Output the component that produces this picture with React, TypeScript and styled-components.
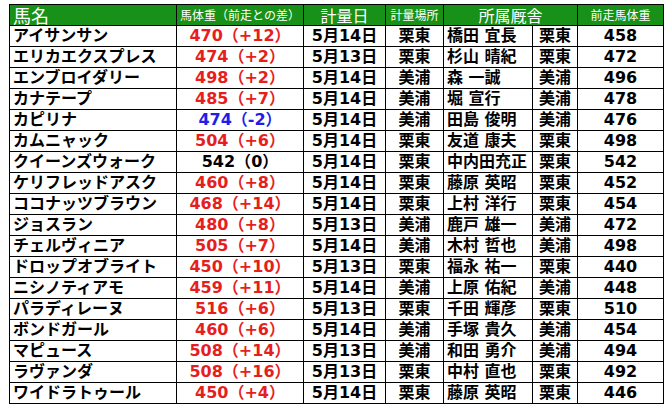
import React from "react";
import styled, { createGlobalStyle } from "styled-components";

const Global = createGlobalStyle`
  html, body { margin: 0; padding: 0; background: #fff; }
  body { padding: 4px 0 0 9px; }
`;

const Table = styled.table`
  border-collapse: collapse;
  table-layout: fixed;
  width: 655px;
  font-family: "DejaVu Sans", Verdana, "Noto Sans CJK JP", sans-serif;
`;

const HeadCell = styled.th<{ $size: number; $align?: string }>`
  background: #179117;
  color: #fff;
  font-weight: normal;
  font-family: "Noto Sans CJK JP", sans-serif;
  font-size: ${(p) => p.$size}px;
  height: 20px;
  padding: 0 ${(p) => (p.$align === "left" ? "3px" : "0")};
  text-align: ${(p) => p.$align || "center"};
  border: 1px solid #000;
  line-height: 1;
  white-space: nowrap;
  vertical-align: middle;
`;

const Cell = styled.td<{ $align?: string; $color?: string }>`
  border: 1px solid #000;
  height: 20px;
  padding: 0 ${(p) => (p.$align === "left" ? "3px" : "0")};
  text-align: ${(p) => p.$align || "center"};
  color: ${(p) => p.$color || "#000"};
  font-weight: bold;
  font-size: 16px;
  line-height: 20px;
  white-space: nowrap;
  overflow: hidden;
`;

type Row = [string, number, number, string, string, string, string, number];

const rows: Row[] = [
  ["アイサンサン", 470, 12, "5月14日", "栗東", "橋田 宜長", "栗東", 458],
  ["エリカエクスプレス", 474, 2, "5月13日", "栗東", "杉山 晴紀", "栗東", 472],
  ["エンブロイダリー", 498, 2, "5月14日", "美浦", "森 一誠", "美浦", 496],
  ["カナテープ", 485, 7, "5月14日", "美浦", "堀 宣行", "美浦", 478],
  ["カピリナ", 474, -2, "5月14日", "美浦", "田島 俊明", "美浦", 476],
  ["カムニャック", 504, 6, "5月14日", "栗東", "友道 康夫", "栗東", 498],
  ["クイーンズウォーク", 542, 0, "5月14日", "栗東", "中内田充正", "栗東", 542],
  ["ケリフレッドアスク", 460, 8, "5月14日", "栗東", "藤原 英昭", "栗東", 452],
  ["ココナッツブラウン", 468, 14, "5月14日", "栗東", "上村 洋行", "栗東", 454],
  ["ジョスラン", 480, 8, "5月13日", "美浦", "鹿戸 雄一", "美浦", 472],
  ["チェルヴィニア", 505, 7, "5月14日", "美浦", "木村 哲也", "美浦", 498],
  ["ドロップオブライト", 450, 10, "5月13日", "栗東", "福永 祐一", "栗東", 440],
  ["ニシノティアモ", 459, 11, "5月14日", "美浦", "上原 佑紀", "美浦", 448],
  ["パラディレーヌ", 516, 6, "5月13日", "栗東", "千田 輝彦", "栗東", 510],
  ["ボンドガール", 460, 6, "5月14日", "美浦", "手塚 貴久", "美浦", 454],
  ["マピュース", 508, 14, "5月13日", "美浦", "和田 勇介", "美浦", 494],
  ["ラヴァンダ", 508, 16, "5月13日", "栗東", "中村 直也", "栗東", 492],
  ["ワイドラトゥール", 450, 4, "5月14日", "栗東", "藤原 英昭", "栗東", 446],
];

const diffColor = (d: number) => (d > 0 ? "#e61e1e" : d < 0 ? "#1e1ee6" : "#000");
const diffText = (d: number) => (d > 0 ? `+${d}` : `${d}`);

export default function App() {
  return (
    <>
      <Global />
      <Table>
        <colgroup>
          <col style={{ width: 167 }} />
          <col style={{ width: 127 }} />
          <col style={{ width: 82 }} />
          <col style={{ width: 58 }} />
          <col style={{ width: 89 }} />
          <col style={{ width: 45 }} />
          <col style={{ width: 86 }} />
        </colgroup>
        <thead>
          <tr>
            <HeadCell $size={18} $align="left">馬名</HeadCell>
            <HeadCell $size={12}>馬体重（前走との差）</HeadCell>
            <HeadCell $size={16}>計量日</HeadCell>
            <HeadCell $size={12}>計量場所</HeadCell>
            <HeadCell $size={16} colSpan={2}>所属厩舎</HeadCell>
            <HeadCell $size={12}>前走馬体重</HeadCell>
          </tr>
        </thead>
        <tbody>
          {rows.map((r) => (
            <tr key={r[0]}>
              <Cell $align="left">{r[0]}</Cell>
              <Cell $color={diffColor(r[2])}>
                {r[1]}（{diffText(r[2])}）
              </Cell>
              <Cell>{r[3]}</Cell>
              <Cell>{r[4]}</Cell>
              <Cell $align="left">{r[5]}</Cell>
              <Cell>{r[6]}</Cell>
              <Cell>{r[7]}</Cell>
            </tr>
          ))}
        </tbody>
      </Table>
    </>
  );
}
